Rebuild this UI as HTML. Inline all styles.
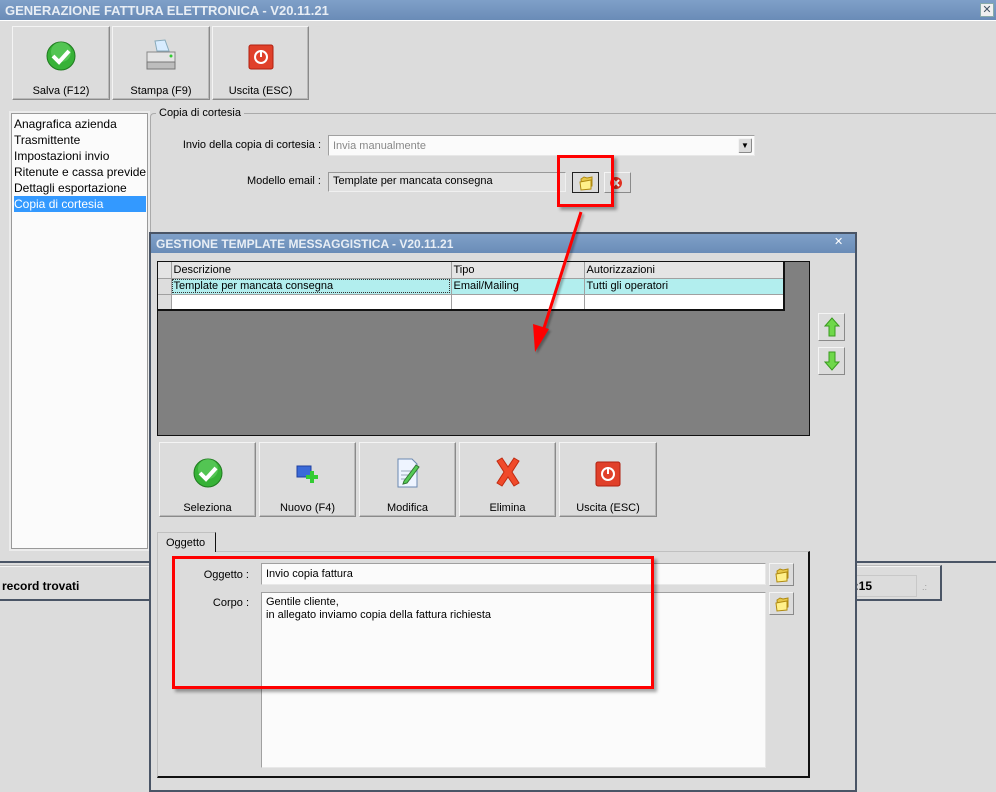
<!DOCTYPE html>
<html><head><meta charset="utf-8"><style>
*{box-sizing:border-box;margin:0;padding:0}
body{width:996px;height:790px;overflow:hidden;background:#dcdcdc;font-family:"Liberation Sans","DejaVu Sans",sans-serif;font-size:12px;color:#000;position:relative}
.a{position:absolute}
.tb{background:linear-gradient(#7fa0c8,#6a8cb7);color:#e8eef5;font-weight:bold;font-size:13px;padding:3px 0 0 5px;white-space:nowrap}
.btn{position:absolute;background:#dcdcdc;border:1px solid;border-color:#f4f4f4 #8a8a8a #8a8a8a #f4f4f4;box-shadow:inset -1px -1px 0 #b8b8b8;text-align:center;font-size:11px}
.btn .l{position:absolute;left:0;right:0;bottom:2px}
.btn svg{position:absolute;left:50%;transform:translateX(-50%)}
.fld{position:absolute;background:#fbfbfb;border:1px solid #a0a0a0;border-color:#a0a0a0 #e8e8e8 #e8e8e8 #a0a0a0;padding:2px 4px;font-size:11px;white-space:nowrap}
.sb{position:absolute;background:#dcdcdc;border:1px solid;border-color:#f4f4f4 #8a8a8a #8a8a8a #f4f4f4}
.red{position:absolute;border:3px solid #ff0000;box-shadow:3px 3px 3px rgba(0,0,0,.35)}
td{border-right:1px solid #a0a0a0;border-bottom:1px solid #a0a0a0;padding:0 2px;height:16px;font-size:11px;white-space:nowrap}
table{border-collapse:collapse}
</style></head><body>
<svg width="0" height="0" style="position:absolute"><defs>
<g id="fold"><path d="M3 4l3-2 3 1 5-1v9l-10 3z" fill="#e7c84a" stroke="#b08a10"/><path d="M2 7l11-2v9l-10 1z" fill="#fff08a" stroke="#b08a10"/></g>
<g id="chk"><circle cx="16" cy="16" r="14" fill="#37b237" stroke="#1f7a1f"/><circle cx="16" cy="12" r="10" fill="#6fd86f" opacity=".5"/><path d="M8 16l6 6 10-11" fill="none" stroke="#fff" stroke-width="4"/></g>
<g id="off"><rect x="2" y="2" width="24" height="24" rx="2" fill="#e0402a" stroke="#b02010"/><circle cx="14" cy="14" r="6" fill="none" stroke="#fff" stroke-width="2"/><path d="M14 7v7" stroke="#fff" stroke-width="2"/></g>
</defs></svg>

<div class="a tb" style="left:0;top:0;width:996px;height:20px">GENERAZIONE FATTURA ELETTRONICA - V20.11.21</div>
<div class="a" style="left:980px;top:3px;width:14px;height:14px;background:#f0f0f0;border:1px solid #8aa;font-size:11px;font-weight:bold;line-height:12px;text-align:center;color:#456">✕</div>
<div class="a" style="left:0;top:20px;width:996px;height:1px;background:#fff"></div>

<div class="btn" style="left:12px;top:26px;width:98px;height:74px"><svg style="top:13px" width="32" height="32"><use href="#chk"/></svg><div class="l">Salva (F12)</div></div>
<div class="btn" style="left:112px;top:26px;width:98px;height:74px"><svg style="top:12px" width="34" height="34"><path d="M11 2l10-1 4 11H13z" fill="#d8ecff" stroke="#8ab"/><path d="M3 13h28v10H3z" fill="#e4e4e4" stroke="#888"/><path d="M3 23h28v7H3z" fill="#bdbdbd" stroke="#777"/><circle cx="27" cy="17" r="1.5" fill="#3c3"/></svg><div class="l">Stampa (F9)</div></div>
<div class="btn" style="left:212px;top:26px;width:97px;height:74px"><svg style="top:16px" width="28" height="28"><use href="#off"/></svg><div class="l">Uscita (ESC)</div></div>

<div class="a" style="left:11px;top:113px;width:137px;height:436px;background:#fbfbfb;border:1px solid #999;box-shadow:0 0 0 2px #ececec"></div>
<div class="a" style="left:14px;top:116px;font-size:12px;line-height:16px;white-space:nowrap;width:132px;overflow:hidden">Anagrafica azienda<br>Trasmittente<br>Impostazioni invio<br>Ritenute e cassa previdenziale<br>Dettagli esportazione<br><span style="display:block;background:#3399ff;color:#fff;margin-left:-2px;padding-left:2px">Copia di cortesia</span></div>

<div class="a" style="left:150px;top:113px;width:846px;height:460px;border-top:1px solid #aaa;border-left:1px solid #aaa;border-top-left-radius:4px"></div>
<div class="a" style="left:156px;top:107px;background:#dcdcdc;padding:0 3px;font-size:11px">Copia di cortesia</div>
<div class="a" style="left:150px;top:139px;width:171px;text-align:right;font-size:11px">Invio della copia di cortesia :</div>
<div class="fld" style="left:328px;top:135px;width:427px;height:21px;color:#888;padding-top:4px">Invia manualmente</div>
<div class="sb" style="left:738px;top:138px;width:14px;height:15px;border-radius:2px;font-size:8px;text-align:center;line-height:13px">▼</div>
<div class="a" style="left:150px;top:175px;width:171px;text-align:right;font-size:11px">Modello email :</div>
<div class="fld" style="left:328px;top:172px;width:238px;height:20px;background:#e2e2e2;border-color:#999 #f0f0f0 #f0f0f0 #999">Template per mancata consegna</div>
<div class="sb" style="left:572px;top:172px;width:27px;height:21px;border:1px solid #222"><svg class="a" style="left:5px;top:2px" width="16" height="16"><use href="#fold"/></svg></div>
<div class="sb" style="left:604px;top:172px;width:27px;height:21px"><svg class="a" style="left:4px;top:3px" width="14" height="14"><circle cx="7" cy="7" r="6" fill="#e03020"/><path d="M4 4l6 6M10 4l-6 6" stroke="#fff" stroke-width="2"/></svg></div>
<div class="red" style="left:557px;top:155px;width:57px;height:52px"></div>

<div class="a" style="left:0;top:561px;width:996px;height:2px;background:#4a5566"></div>
<div class="a" style="left:0;top:565px;width:942px;height:36px;border-top:1px solid #bbb;border-bottom:2px solid #4a5566;border-right:2px solid #4a5566;box-shadow:inset 0 1px 0 #f4f4f4"></div>
<div class="a" style="left:2px;top:579px;font-weight:bold;font-size:12px">record trovati</div>
<div class="a" style="left:845px;top:575px;width:72px;height:22px;border:1px solid #c8c8c8;font-weight:bold;padding:3px 0 0 2px">5:15</div>
<div class="a" style="left:922px;top:582px;font-size:9px;color:#999">.:</div>

<div class="a" style="left:149px;top:232px;width:708px;height:560px;background:#dcdcdc;border:2px solid #4a5566"></div>
<div class="a tb" style="left:151px;top:234px;width:704px;height:19px;font-size:12px;padding-top:3px">GESTIONE TEMPLATE MESSAGGISTICA - V20.11.21</div>
<div class="a" style="left:834px;top:236px;width:12px;height:12px;font-size:11px;font-weight:bold;color:#fff;line-height:12px">✕</div>

<div class="a" style="left:157px;top:261px;width:653px;height:175px;background:#808080;border:1px solid #111"></div>
<table class="a" style="left:158px;top:262px;width:627px;background:#fff;border-right:2px solid #111;border-bottom:2px solid #111">
<tr style="background:#e4e4e4"><td style="width:13px"></td><td style="width:280px">Descrizione</td><td style="width:133px">Tipo</td><td>Autorizzazioni</td></tr>
<tr style="background:#b2eeee"><td style="background:#ddd"></td><td style="outline:1px dotted #333;outline-offset:-2px">Template per mancata consegna</td><td>Email/Mailing</td><td>Tutti gli operatori</td></tr>
<tr><td style="background:#ddd"></td><td></td><td></td><td></td></tr>
</table>

<div class="sb" style="left:818px;top:313px;width:27px;height:28px"><svg class="a" style="left:5px;top:3px" width="16" height="20"><path d="M8 1L1 9h4v10h6V9h4z" fill="#6fd84a" stroke="#3a9a20"/></svg></div>
<div class="sb" style="left:818px;top:347px;width:27px;height:28px"><svg class="a" style="left:5px;top:3px" width="16" height="20"><path d="M8 19L1 11h4V1h6v10h4z" fill="#6fd84a" stroke="#3a9a20"/></svg></div>

<div class="btn" style="left:159px;top:442px;width:97px;height:75px"><svg style="top:14px" width="32" height="32"><use href="#chk"/></svg><div class="l">Seleziona</div></div>
<div class="btn" style="left:259px;top:442px;width:97px;height:75px"><svg style="top:20px" width="26" height="22"><rect x="2" y="3" width="14" height="11" fill="#3a6ad8" stroke="#2040a0"/><path d="M17 8v12M11 14h12" stroke="#3c3" stroke-width="4"/></svg><div class="l">Nuovo (F4)</div></div>
<div class="btn" style="left:359px;top:442px;width:97px;height:75px"><svg style="top:14px" width="26" height="32"><path d="M3 2h14l5 5v23H3z" fill="#eef4ff" stroke="#6a88b0"/><path d="M6 14h12M6 18h12M6 22h10" stroke="#9ab"/><path d="M9 24l12-16 3 2-12 16-4 1z" fill="#5c5" stroke="#373"/></svg><div class="l">Modifica</div></div>
<div class="btn" style="left:459px;top:442px;width:97px;height:75px"><svg style="top:14px" width="28" height="30"><path d="M3 4l5-3 6 9 6-9 5 3-7 11 7 11-5 3-6-9-6 9-5-3 7-11z" fill="#f04a2a" stroke="#c02a10"/></svg><div class="l">Elimina</div></div>
<div class="btn" style="left:559px;top:442px;width:98px;height:75px"><svg style="top:17px" width="28" height="28"><use href="#off"/></svg><div class="l">Uscita (ESC)</div></div>

<div class="a" style="left:157px;top:551px;width:653px;height:227px;border:1px solid #c0c0c0;border-right:2px solid #111;border-bottom:2px solid #111"></div>
<div class="a" style="left:157px;top:532px;width:59px;height:20px;background:#dcdcdc;border:1px solid #c0c0c0;border-right:1px solid #111;border-bottom:none;font-size:11px;padding:4px 0 0 8px">Oggetto</div>

<div class="a" style="left:170px;top:569px;width:79px;text-align:right;font-size:11px">Oggetto :</div>
<div class="fld" style="left:261px;top:563px;width:505px;height:22px;padding-top:4px">Invio copia fattura</div>
<div class="sb" style="left:769px;top:563px;width:25px;height:23px"><svg class="a" style="left:4px;top:3px" width="16" height="16"><use href="#fold"/></svg></div>
<div class="a" style="left:170px;top:597px;width:79px;text-align:right;font-size:11px">Corpo :</div>
<div class="fld" style="left:261px;top:592px;width:505px;height:176px;line-height:13px;padding-top:3px">Gentile cliente,<br>in allegato inviamo copia della fattura richiesta</div>
<div class="sb" style="left:769px;top:592px;width:25px;height:23px"><svg class="a" style="left:4px;top:3px" width="16" height="16"><use href="#fold"/></svg></div>

<div class="red" style="left:172px;top:556px;width:482px;height:133px"></div>

<svg class="a" style="left:0;top:0;filter:drop-shadow(2px 2px 1px rgba(0,0,0,.3))" width="996" height="790"><path d="M581 212L544 328" stroke="#f00" stroke-width="3"/><path d="M535 352L533 324L549 329z" fill="#f00"/></svg>
</body></html>
